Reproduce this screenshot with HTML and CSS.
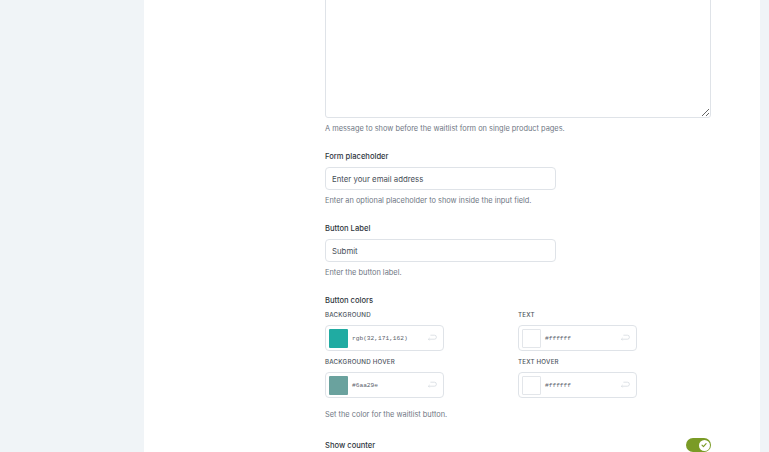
FILE: index.html
```html
<!DOCTYPE html>
<html lang="en">
<head>
    <meta charset="UTF-8">
    <title>Waitlist Settings</title>
    <link rel="stylesheet" href="styles.css">
</head>
<body>
    <div class="sidebar"></div>
    <div class="panel">
        <div class="fields">
            <div class="field first">
                <textarea class="message"></textarea>
                <p class="help">A message to show before the waitlist form on single product pages.</p>
            </div>

            <div class="field">
                <label class="label">Form placeholder</label>
                <input type="text" class="text-input" value="Enter your email address">
                <p class="help">Enter an optional placeholder to show inside the input field.</p>
            </div>

            <div class="field">
                <label class="label">Button Label</label>
                <input type="text" class="text-input" value="Submit">
                <p class="help">Enter the button label.</p>
            </div>

            <div class="field">
                <label class="label">Button colors</label>
                <div class="color-grid">
                    <div class="color-item">
                        <span class="sub-label">Background</span>
                        <div class="color-input">
                            <span class="swatch" style="background: rgb(32,171,162)"></span>
                            <span class="color-value">rgb(32,171,162)</span>
                            <svg class="reset" viewBox="0 0 12 10" width="10" height="8"><path d="M4 1.5 H9 a2.5 2.5 0 0 1 0 5 H1.5 M3 5 L1.5 6.5 L3 8" fill="none" stroke="#d6dadf" stroke-width="1"/></svg>
                        </div>
                    </div>
                    <div class="color-item">
                        <span class="sub-label">Text</span>
                        <div class="color-input">
                            <span class="swatch white"></span>
                            <span class="color-value">#ffffff</span>
                            <svg class="reset" viewBox="0 0 12 10" width="10" height="8"><path d="M4 1.5 H9 a2.5 2.5 0 0 1 0 5 H1.5 M3 5 L1.5 6.5 L3 8" fill="none" stroke="#d6dadf" stroke-width="1"/></svg>
                        </div>
                    </div>
                    <div class="color-item">
                        <span class="sub-label">Background hover</span>
                        <div class="color-input">
                            <span class="swatch" style="background: #6aa29e"></span>
                            <span class="color-value">#6aa29e</span>
                            <svg class="reset" viewBox="0 0 12 10" width="10" height="8"><path d="M4 1.5 H9 a2.5 2.5 0 0 1 0 5 H1.5 M3 5 L1.5 6.5 L3 8" fill="none" stroke="#d6dadf" stroke-width="1"/></svg>
                        </div>
                    </div>
                    <div class="color-item">
                        <span class="sub-label">Text hover</span>
                        <div class="color-input">
                            <span class="swatch white"></span>
                            <span class="color-value">#ffffff</span>
                            <svg class="reset" viewBox="0 0 12 10" width="10" height="8"><path d="M4 1.5 H9 a2.5 2.5 0 0 1 0 5 H1.5 M3 5 L1.5 6.5 L3 8" fill="none" stroke="#d6dadf" stroke-width="1"/></svg>
                        </div>
                    </div>
                </div>
                <p class="help colors-help">Set the color for the waitlist button.</p>
            </div>

            <div class="field toggle-row">
                <label class="label">Show counter</label>
                <span class="toggle">
                    <span class="knob">
                        <svg viewBox="0 0 10 10" width="8" height="8"><path d="M2.5 5.2 L4.3 7 L7.6 3.3" fill="none" stroke="#7a9b26" stroke-width="1.4" stroke-linecap="round" stroke-linejoin="round"/></svg>
                    </span>
                </span>
            </div>
        </div>
    </div>
    <div class="edge"></div>
</body>
</html>
```

FILE: styles.css
```css
body {
    margin: 0;
    height: 452px;
    overflow: hidden;
    display: flex;
    font-family: Inter, "Noto Sans", Arial, sans-serif;
    background-color: #f0f4f7;
}
.sidebar {
    width: 144px;
    flex-shrink: 0;
    background-color: #f0f4f7;
}
.panel {
    flex: 1;
    background-color: #fff;
    padding-left: 181px;
}
.edge {
    width: 9px;
    flex-shrink: 0;
    background-color: #f0f4f7;
}
.fields {
    width: 386px;
    margin-top: -4px;
}
.field {
    margin-bottom: 19px;
}
.message {
    display: block;
    box-sizing: border-box;
    width: 386px;
    height: 122px;
    border: 1px solid #dfe3e8;
    border-radius: 3px;
    margin: 0;
}
.label {
    display: block;
    font-size: 7.6px;
    font-weight: 500;
    color: #2f3640;
    margin-bottom: 6px;
}
.help {
    font-size: 7.4px;
    color: #6f7784;
    margin: 6px 0 0;
}
.colors-help {
    margin-top: 12px;
}
.text-input {
    display: block;
    box-sizing: border-box;
    width: 231px;
    height: 23px;
    padding: 0 6px;
    border: 1px solid #dfe3e8;
    border-radius: 4px;
    font-family: inherit;
    font-size: 7.8px;
    color: #474e58;
    margin: 0;
}
.color-grid {
    display: grid;
    grid-template-columns: 193px 193px;
    row-gap: 7px;
    margin-top: 2px;
}
.sub-label {
    display: block;
    font-size: 6.2px;
    font-weight: 500;
    text-transform: uppercase;
    letter-spacing: 0.2px;
    color: #4e5560;
    margin-bottom: 7px;
}
.color-input {
    box-sizing: border-box;
    width: 119px;
    height: 26px;
    border: 1px solid #dfe3e8;
    border-radius: 4px;
    display: flex;
    align-items: center;
    padding: 0 6px 0 3px;
}
.swatch {
    width: 19px;
    height: 19px;
    border-radius: 1px;
    flex-shrink: 0;
}
.swatch.white {
    background: #fff;
    box-sizing: border-box;
    border: 1px solid #e3e6ea;
}
.color-value {
    font-family: "Liberation Mono", "DejaVu Sans Mono", monospace;
    font-size: 6.2px;
    color: #5a616b;
    margin-left: 4px;
    flex: 1;
}
.reset {
    flex-shrink: 0;
}
.toggle-row {
    display: flex;
    justify-content: space-between;
    align-items: center;
    margin-top: 1px;
}
.toggle-row .label {
    margin: 0;
}
.toggle {
    width: 25px;
    height: 14px;
    border-radius: 7px;
    background-color: #7a9b26;
    display: flex;
    align-items: center;
    justify-content: flex-end;
    padding: 0 1.5px;
    box-sizing: border-box;
}
.knob {
    width: 11px;
    height: 11px;
    border-radius: 50%;
    background: #fff;
    display: flex;
    align-items: center;
    justify-content: center;
}
```
